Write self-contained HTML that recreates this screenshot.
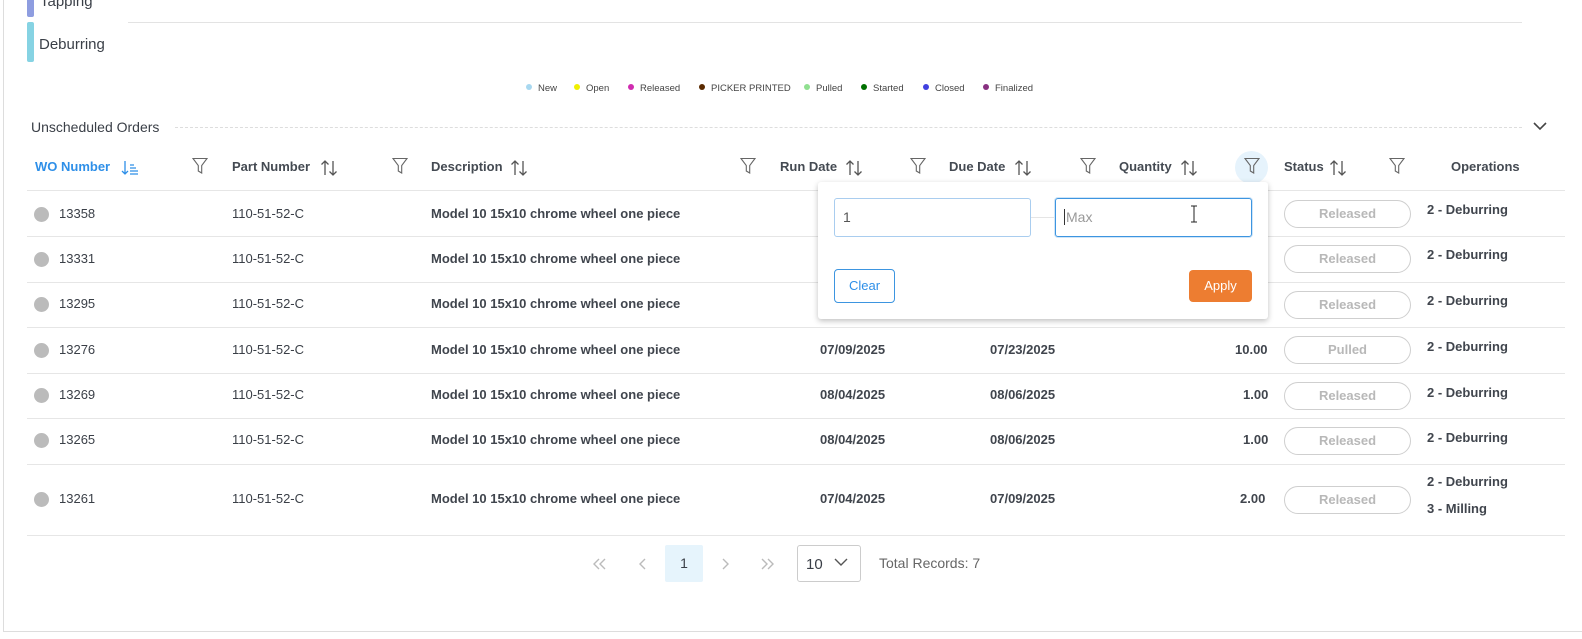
<!DOCTYPE html>
<html><head><meta charset="utf-8"><style>
*{box-sizing:border-box;margin:0;padding:0}
body{width:1582px;height:639px;position:relative;overflow:hidden;background:#fff;font-family:"Liberation Sans",sans-serif;color:#3a3f47;font-size:13px}
.a{position:absolute;white-space:nowrap}
.h{font-weight:bold;font-size:13px;color:#444a52;top:159px}
.b{font-weight:bold;color:#40454d}
.line{position:absolute;left:27px;width:1538px;height:1px;background:#e6e6e6}
.dot{position:absolute;width:15px;height:15px;border-radius:50%;background:#bbb;left:34px}
.pill{position:absolute;left:1284px;width:127px;height:28px;border:1px solid #cfcfcf;border-radius:14px;color:#b8b8b8;font-weight:bold;text-align:center;line-height:26px;font-size:13px}
.lg{position:absolute;top:83px;font-size:9.5px;color:#444}
.lg i{display:inline-block;width:6px;height:6px;border-radius:50%;margin-right:6px;vertical-align:1px}
svg.f{position:absolute;top:157px}
</style></head><body>
<div class="a" style="left:3px;top:0;width:1px;height:632px;background:#ddd"></div>
<div class="a" style="left:3px;top:631px;width:1579px;height:1px;background:#ddd"></div>
<div class="a" style="left:27px;top:0;width:7px;height:17px;background:#8e9de0;border-radius:0 0 2px 2px"></div>
<div class="a" style="left:40px;top:-7px;font-size:15px">Tapping</div>
<div class="a" style="left:128px;top:22px;width:1394px;height:1px;background:#e3e3e3"></div>
<div class="a" style="left:27px;top:22px;width:7px;height:40px;background:#86d3e3;border-radius:2px"></div>
<div class="a" style="left:39px;top:36px;font-size:15px">Deburring</div>

<div class="lg" style="left:526px"><i style="background:#a8d8f0"></i>New</div>
<div class="lg" style="left:574px"><i style="background:#f0f000"></i>Open</div>
<div class="lg" style="left:628px"><i style="background:#d02cb0"></i>Released</div>
<div class="lg" style="left:699px"><i style="background:#5a2a00"></i>PICKER PRINTED</div>
<div class="lg" style="left:804px"><i style="background:#90e090"></i>Pulled</div>
<div class="lg" style="left:861px"><i style="background:#007000"></i>Started</div>
<div class="lg" style="left:923px"><i style="background:#4040e0"></i>Closed</div>
<div class="lg" style="left:983px"><i style="background:#883080"></i>Finalized</div>

<div class="a" style="left:31px;top:119px;font-size:14px;color:#3a3f47">Unscheduled Orders</div>
<div class="a" style="left:175px;top:127px;width:1347px;border-top:1px dashed #ddd"></div>
<svg class="a" style="left:1532px;top:121px" width="16" height="10"><path d="M2 2l6 6 6-6" fill="none" stroke="#444" stroke-width="1.6"/></svg>

<div class="a h" style="left:35px;color:#2e8fe8">WO Number</div>
<svg class="a" style="left:121px;top:160px" width="18" height="16"><path d="M4 1v13M1 11l3 3 3-3M9 5h4M9 8h6M9 11h8M9 14h8" fill="none" stroke="#2e8fe8" stroke-width="1.3"/></svg>
<div class="a h" style="left:232px">Part Number</div>
<div class="a h" style="left:431px">Description</div>
<div class="a h" style="left:780px">Run Date</div>
<div class="a h" style="left:949px">Due Date</div>
<div class="a h" style="left:1119px">Quantity</div>
<div class="a h" style="left:1284px">Status</div>
<div class="a h" style="left:1451px">Operations</div>

<svg width="0" height="0" style="position:absolute"><defs>
<symbol id="s" viewBox="0 0 18 18"><path d="M5 16V2M1.5 5.5L5 2l3.5 3.5M13 2v14M9.5 12.5L13 16l3.5-3.5" fill="none" stroke="#555" stroke-width="1.3"/></symbol>
<symbol id="fl" viewBox="0 0 16 18"><path d="M1 1.5h14l-5.3 7v7.5l-3.4-2v-5.5z" fill="none" stroke="#666" stroke-width="1.1"/></symbol>
</defs></svg>
<svg class="a" style="left:320px;top:159px" width="18" height="18"><use href="#s"/></svg>
<svg class="a" style="left:510px;top:159px" width="18" height="18"><use href="#s"/></svg>
<svg class="a" style="left:845px;top:159px" width="18" height="18"><use href="#s"/></svg>
<svg class="a" style="left:1014px;top:159px" width="18" height="18"><use href="#s"/></svg>
<svg class="a" style="left:1180px;top:159px" width="18" height="18"><use href="#s"/></svg>
<svg class="a" style="left:1329px;top:159px" width="18" height="18"><use href="#s"/></svg>

<div class="a" style="left:1235px;top:151px;width:33px;height:33px;border-radius:50%;background:#e6f3fc"></div>
<svg class="f" style="left:192px" width="16" height="18"><use href="#fl"/></svg>
<svg class="f" style="left:392px" width="16" height="18"><use href="#fl"/></svg>
<svg class="f" style="left:740px" width="16" height="18"><use href="#fl"/></svg>
<svg class="f" style="left:910px" width="16" height="18"><use href="#fl"/></svg>
<svg class="f" style="left:1080px" width="16" height="18"><use href="#fl"/></svg>
<svg class="f" style="left:1244px" width="16" height="18"><use href="#fl"/></svg>
<svg class="f" style="left:1389px" width="16" height="18"><use href="#fl"/></svg>

<div class="line" style="top:190px"></div>
<div class="line" style="top:236px"></div>
<div class="line" style="top:282px"></div>
<div class="line" style="top:327px"></div>
<div class="line" style="top:373px"></div>
<div class="line" style="top:418px"></div>
<div class="line" style="top:464px"></div>
<div class="line" style="top:535px"></div>

<div class="dot" style="top:207px"></div><div class="a" style="left:59px;top:206px">13358</div><div class="a" style="left:232px;top:206px">110-51-52-C</div><div class="a b" style="left:431px;top:206px">Model 10 15x10 chrome wheel one piece</div><div class="pill" style="top:200px">Released</div><div class="a b" style="left:1427px;top:202px">2 - Deburring</div>
<div class="dot" style="top:252px"></div><div class="a" style="left:59px;top:251px">13331</div><div class="a" style="left:232px;top:251px">110-51-52-C</div><div class="a b" style="left:431px;top:251px">Model 10 15x10 chrome wheel one piece</div><div class="pill" style="top:245px">Released</div><div class="a b" style="left:1427px;top:247px">2 - Deburring</div>
<div class="dot" style="top:297px"></div><div class="a" style="left:59px;top:296px">13295</div><div class="a" style="left:232px;top:296px">110-51-52-C</div><div class="a b" style="left:431px;top:296px">Model 10 15x10 chrome wheel one piece</div><div class="pill" style="top:291px">Released</div><div class="a b" style="left:1427px;top:293px">2 - Deburring</div>
<div class="dot" style="top:343px"></div><div class="a" style="left:59px;top:342px">13276</div><div class="a" style="left:232px;top:342px">110-51-52-C</div><div class="a b" style="left:431px;top:342px">Model 10 15x10 chrome wheel one piece</div><div class="a b" style="left:820px;top:342px">07/09/2025</div><div class="a b" style="left:990px;top:342px">07/23/2025</div><div class="a b" style="left:1235px;top:342px">10.00</div><div class="pill" style="top:336px">Pulled</div><div class="a b" style="left:1427px;top:339px">2 - Deburring</div>
<div class="dot" style="top:388px"></div><div class="a" style="left:59px;top:387px">13269</div><div class="a" style="left:232px;top:387px">110-51-52-C</div><div class="a b" style="left:431px;top:387px">Model 10 15x10 chrome wheel one piece</div><div class="a b" style="left:820px;top:387px">08/04/2025</div><div class="a b" style="left:990px;top:387px">08/06/2025</div><div class="a b" style="left:1243px;top:387px">1.00</div><div class="pill" style="top:382px">Released</div><div class="a b" style="left:1427px;top:385px">2 - Deburring</div>
<div class="dot" style="top:433px"></div><div class="a" style="left:59px;top:432px">13265</div><div class="a" style="left:232px;top:432px">110-51-52-C</div><div class="a b" style="left:431px;top:432px">Model 10 15x10 chrome wheel one piece</div><div class="a b" style="left:820px;top:432px">08/04/2025</div><div class="a b" style="left:990px;top:432px">08/06/2025</div><div class="a b" style="left:1243px;top:432px">1.00</div><div class="pill" style="top:427px">Released</div><div class="a b" style="left:1427px;top:430px">2 - Deburring</div>
<div class="dot" style="top:492px"></div><div class="a" style="left:59px;top:491px">13261</div><div class="a" style="left:232px;top:491px">110-51-52-C</div><div class="a b" style="left:431px;top:491px">Model 10 15x10 chrome wheel one piece</div><div class="a b" style="left:820px;top:491px">07/04/2025</div><div class="a b" style="left:990px;top:491px">07/09/2025</div><div class="a b" style="left:1240px;top:491px">2.00</div><div class="pill" style="top:486px">Released</div><div class="a b" style="left:1427px;top:474px">2 - Deburring</div><div class="a b" style="left:1427px;top:501px">3 - Milling</div>

<div class="a" style="left:818px;top:182px;width:450px;height:137px;background:#fff;border-radius:3px;box-shadow:0 2px 6px rgba(0,0,0,.25)"></div>
<div class="a" style="left:834px;top:198px;width:197px;height:39px;border:1px solid #a9cdef;border-radius:3px;padding:10px 8px;font-size:14px;color:#555">1</div>
<div class="a" style="left:1031px;top:217px;width:24px;height:1px;background:#e5e5e5"></div>
<div class="a" style="left:1055px;top:198px;width:197px;height:39px;border:1px solid #3d95e0;border-radius:3px;box-shadow:0 0 0 1px #cfe5f8;padding:10px 8px;font-size:14px;color:#999"><span style="border-left:1px solid #333;padding-left:1px">Max</span></div>
<svg class="a" style="left:1190px;top:205px" width="8" height="18"><path d="M1 1h6M4 1v16M1 17h6" fill="none" stroke="#222" stroke-width="1"/></svg>
<div class="a" style="left:834px;top:269px;width:61px;height:34px;border:1px solid #3d95e0;border-radius:4px;color:#2e8fe8;text-align:center;line-height:32px">Clear</div>
<div class="a" style="left:1189px;top:270px;width:63px;height:32px;background:#ed7d31;border-radius:4px;color:#fff;text-align:center;line-height:32px">Apply</div>

<svg class="a" style="left:593px;top:558px" width="14" height="12"><path d="M6 1L1 6l5 5M12 1L7 6l5 5" fill="none" stroke="#bbb" stroke-width="1.4"/></svg>
<svg class="a" style="left:639px;top:558px" width="8" height="12"><path d="M6 1L1 6l5 5" fill="none" stroke="#bbb" stroke-width="1.4"/></svg>
<div class="a" style="left:665px;top:545px;width:38px;height:37px;background:#e6f4fc;border-radius:2px;text-align:center;line-height:37px;font-size:14px">1</div>
<svg class="a" style="left:722px;top:558px" width="8" height="12"><path d="M1 1l5 5-5 5" fill="none" stroke="#bbb" stroke-width="1.4"/></svg>
<svg class="a" style="left:761px;top:558px" width="14" height="12"><path d="M1 1l5 5-5 5M7 1l5 5-5 5" fill="none" stroke="#bbb" stroke-width="1.4"/></svg>
<div class="a" style="left:797px;top:545px;width:64px;height:37px;border:1px solid #ccc;border-radius:3px;padding:10px 8px;font-size:15px">10</div>
<svg class="a" style="left:834px;top:558px" width="14" height="9"><path d="M1 1l6 6 6-6" fill="none" stroke="#555" stroke-width="1.4"/></svg>
<div class="a" style="left:879px;top:555px;font-size:14px;color:#666">Total Records: 7</div>
</body></html>
